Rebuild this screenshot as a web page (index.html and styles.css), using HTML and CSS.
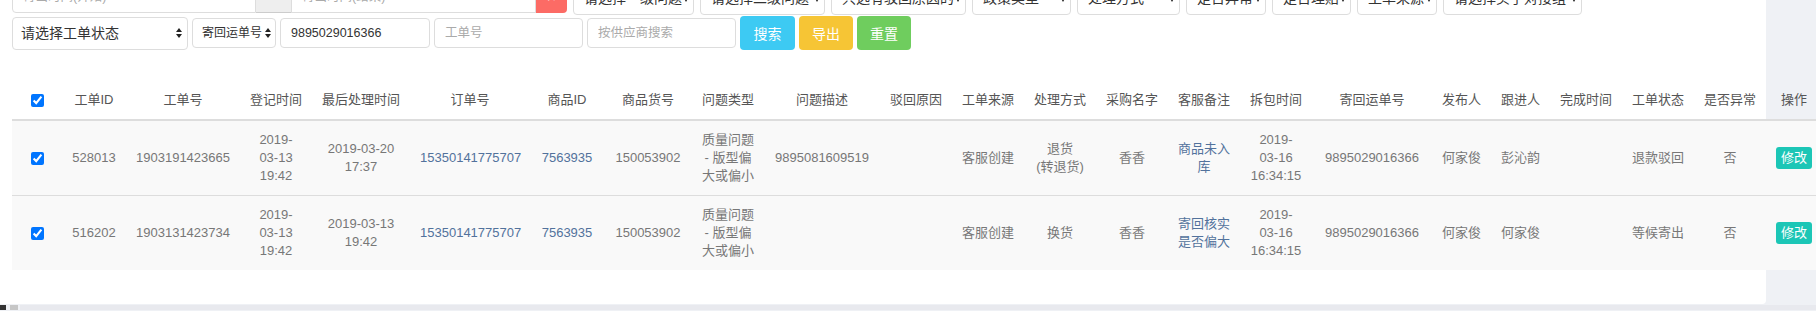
FILE: index.html
```html
<!DOCTYPE html>
<html lang="zh-CN">
<head>
    <meta charset="UTF-8">
    <meta name="viewport" content="width=device-width, initial-scale=1.0">
    <title>售后工单</title>
    <link rel="stylesheet" href="styles.css">
</head>
<body>
    <div class="panel">
        <div class="filters">
            <!-- 第一行筛选 -->
            <div class="filter-row filter-row-top">
                <div class="input-group">
                    <input class="form-input date-start" type="text" placeholder="寄出时间(开始)">
                    <span class="addon">–</span>
                    <div class="clearable">
                        <input class="form-input date-end" type="text" placeholder="寄出时间(结束)">
                        <button class="clear-btn">&times;</button>
                    </div>
                </div>
                <div class="select-wrap sel-level1">
                    <select><option>请选择一级问题</option></select><i class="caret"></i>
                </div>
                <div class="select-wrap sel-level2">
                    <select><option>请选择二级问题</option></select><i class="caret"></i>
                </div>
                <div class="select-wrap sel-reject">
                    <select><option>只选有驳回原因的</option></select><i class="caret"></i>
                </div>
                <div class="select-wrap sel-policy">
                    <select><option>政策类型</option></select><i class="caret"></i>
                </div>
                <div class="select-wrap sel-handle">
                    <select><option>处理方式</option></select><i class="caret"></i>
                </div>
                <div class="select-wrap sel-short">
                    <select><option>是否异常</option></select><i class="caret"></i>
                </div>
                <div class="select-wrap sel-claim">
                    <select><option>是否理赔</option></select><i class="caret"></i>
                </div>
                <div class="select-wrap sel-short">
                    <select><option>工单来源</option></select><i class="caret"></i>
                </div>
                <div class="select-wrap sel-buyer">
                    <select><option>请选择买手对接组</option></select><i class="caret"></i>
                </div>
            </div>

            <!-- 第二行筛选 -->
            <div class="filter-row filter-row-bottom">
                <div class="select-wrap select-large sel-status">
                    <select><option>请选择工单状态</option></select><i class="caret-updown"></i>
                </div>
                <div class="select-wrap select-small sel-field">
                    <select><option>寄回运单号</option></select><i class="caret-updown"></i>
                </div>
                <input class="form-input input-small search-value" type="text" value="9895029016366">
                <input class="form-input input-small search-ticket" type="text" placeholder="工单号">
                <input class="form-input input-small search-supplier" type="text" placeholder="按供应商搜索">
                <button class="btn btn-search">搜索</button>
                <button class="btn btn-export">导出</button>
                <button class="btn btn-reset">重置</button>
            </div>
        </div>

        <table class="order-table">
            <colgroup>
                <col class="w50">
                <col class="w64">
                <col class="w114">
                <col class="w72">
                <col class="w98">
                <col class="w120">
                <col class="w74">
                <col class="w88">
                <col class="w72">
                <col class="w116">
                <col class="w72">
                <col class="w72">
                <col class="w72">
                <col class="w72">
                <col class="w72">
                <col class="w72">
                <col class="w120">
                <col class="w59">
                <col class="w59">
                <col class="w72">
                <col class="w72">
                <col class="w72">
                <col class="w56">
            </colgroup>
            <thead>
                <tr>
                    <th><input type="checkbox" checked></th>
                    <th>工单ID</th>
                    <th>工单号</th>
                    <th>登记时间</th>
                    <th>最后处理时间</th>
                    <th>订单号</th>
                    <th>商品ID</th>
                    <th>商品货号</th>
                    <th>问题类型</th>
                    <th>问题描述</th>
                    <th>驳回原因</th>
                    <th>工单来源</th>
                    <th>处理方式</th>
                    <th>采购名字</th>
                    <th>客服备注</th>
                    <th>拆包时间</th>
                    <th>寄回运单号</th>
                    <th>发布人</th>
                    <th>跟进人</th>
                    <th>完成时间</th>
                    <th>工单状态</th>
                    <th>是否异常</th>
                    <th>操作</th>
                </tr>
            </thead>
            <tbody>
                <tr>
                    <td><input type="checkbox" checked></td>
                    <td>528013</td>
                    <td>1903191423665</td>
                    <td>2019-03-13 19:42</td>
                    <td>2019-03-20 17:37</td>
                    <td><a href="#">15350141775707</a></td>
                    <td><a href="#">7563935</a></td>
                    <td>150053902</td>
                    <td>质量问题 - 版型偏大或偏小</td>
                    <td>9895081609519</td>
                    <td></td>
                    <td>客服创建</td>
                    <td>退货<br>(转退货)</td>
                    <td>香香</td>
                    <td><a href="#">商品未入库</a></td>
                    <td>2019-03-16 16:34:15</td>
                    <td>9895029016366</td>
                    <td>何家俊</td>
                    <td>彭沁韵</td>
                    <td></td>
                    <td>退款驳回</td>
                    <td>否</td>
                    <td><button class="edit-btn">修改</button></td>
                </tr>
                <tr>
                    <td><input type="checkbox" checked></td>
                    <td>516202</td>
                    <td>1903131423734</td>
                    <td>2019-03-13 19:42</td>
                    <td>2019-03-13 19:42</td>
                    <td><a href="#">15350141775707</a></td>
                    <td><a href="#">7563935</a></td>
                    <td>150053902</td>
                    <td>质量问题 - 版型偏大或偏小</td>
                    <td></td>
                    <td></td>
                    <td>客服创建</td>
                    <td>换货</td>
                    <td>香香</td>
                    <td><a href="#">寄回核实是否偏大</a></td>
                    <td>2019-03-16 16:34:15</td>
                    <td>9895029016366</td>
                    <td>何家俊</td>
                    <td>何家俊</td>
                    <td></td>
                    <td>等候寄出</td>
                    <td>否</td>
                    <td><button class="edit-btn">修改</button></td>
                </tr>
            </tbody>
        </table>
    </div>

    <div class="scrollbar">
        <span class="bar-dark"></span>
        <span class="bar-light"></span>
        <span class="bar-track"></span>
    </div>
</body>
</html>
```

FILE: styles.css
```css
body {
    margin: 0;
    height: 311px;
    overflow: hidden;
    background-color: #eff1f5;
    font-family: "Liberation Sans", "Noto Sans CJK SC", sans-serif;
    font-size: 13px;
    color: #333;
}

.panel {
    width: 1766px;
    box-sizing: border-box;
    padding: 0 0 34px 12px;
    background-color: #fff;
    border-bottom-right-radius: 4px;
}

/* 筛选区 */
.filters {
    margin-top: -19px;
}

.filter-row {
    display: flex;
    gap: 6px;
    height: 34px;
}

.filter-row-bottom {
    gap: 4px;
    margin-top: 1px;
    align-items: center;
}

.form-input {
    box-sizing: border-box;
    height: 32px;
    padding: 0 10px;
    border: 1px solid #ddd;
    border-radius: 4px;
    background-color: #fff;
    font-family: inherit;
    font-size: 12.5px;
    color: #333;
    outline: none;
}

.form-input::placeholder {
    color: #aaa;
}

.input-group {
    display: flex;
    width: 555px;
}

.date-start {
    width: 244px;
    border-radius: 4px 0 0 4px;
}

.addon {
    box-sizing: border-box;
    width: 35px;
    height: 32px;
    line-height: 30px;
    text-align: center;
    background-color: #eee;
    border: 1px solid #ccc;
    border-left: none;
    border-right: none;
    color: #555;
}

.clearable {
    display: flex;
    flex: 1;
}

.date-end {
    flex: 1;
    min-width: 0;
    border-radius: 0;
}

.clear-btn {
    width: 31px;
    height: 32px;
    padding: 0;
    border: none;
    border-radius: 0 4px 4px 0;
    background-color: #fc6b65;
    color: #fff;
    font-size: 16px;
    font-weight: bold;
}

.select-wrap {
    position: relative;
    box-sizing: border-box;
    height: 34px;
}

.select-wrap select {
    -webkit-appearance: none;
    appearance: none;
    box-sizing: border-box;
    width: 100%;
    height: 100%;
    padding: 0 10px 0 10px;
    border: 1px solid #ddd;
    border-radius: 4px;
    background-color: #fff;
    font-family: inherit;
    font-size: 14px;
    color: #333;
    outline: none;
}

.caret {
    position: absolute;
    right: 4px;
    top: 50%;
    margin-top: -3px;
    border-left: 4px solid transparent;
    border-right: 4px solid transparent;
    border-top: 7px solid #222;
    pointer-events: none;
}

.caret-updown {
    position: absolute;
    right: 5px;
    top: 50%;
    margin-top: -5px;
    width: 7px;
    height: 10px;
    pointer-events: none;
}

.caret-updown::before,
.caret-updown::after {
    content: "";
    position: absolute;
    left: 0;
    border-left: 3.5px solid transparent;
    border-right: 3.5px solid transparent;
}

.caret-updown::before {
    top: 0;
    border-bottom: 4px solid #222;
}

.caret-updown::after {
    bottom: 0;
    border-top: 4px solid #222;
}

.sel-level1 { width: 121px; }
.sel-level2 { width: 125px; }
.sel-reject { width: 135px; }
.sel-policy { width: 99px; }
.sel-handle { width: 103px; }
.sel-short { width: 80px; }
.sel-claim { width: 79px; }
.sel-buyer { width: 139px; }

.select-large {
    height: 33px;
}

.select-large select {
    padding: 0 16px 0 8px;
}

.select-small {
    height: 30px;
}

.select-small select {
    font-size: 12px;
    padding: 0 10px 0 9px;
}

.select-small .caret-updown {
    right: 4px;
}

.sel-status { width: 176px; }
.sel-field { width: 84px; }

.input-small {
    height: 30px;
}

.search-value { width: 150px; }
.search-ticket { width: 149px; }
.search-supplier { width: 149px; }

.btn {
    width: 54px;
    height: 34px;
    padding: 0;
    border: none;
    border-radius: 4px;
    color: #fff;
    font-family: inherit;
    font-size: 14px;
    cursor: pointer;
}

.btn-search {
    width: 55px;
    background-color: #3dcaf3;
}

.btn-export {
    background-color: #f6c535;
}

.btn-reset {
    background-color: #6fcd5e;
}

/* 工单表格 */
.order-table {
    table-layout: fixed;
    width: 1810px;
    margin-top: 31px;
    border-collapse: collapse;
}

.order-table th,
.order-table td {
    padding: 10px;
    line-height: 18px;
    text-align: center;
    vertical-align: middle;
}

.order-table th {
    font-weight: normal;
    color: #555;
    border-bottom: 2px solid #ddd;
}

.order-table td {
    color: #777;
    border-top: 1px solid #ddd;
}

.order-table tbody tr {
    background-color: #f9f9f9;
}

.order-table a {
    color: #52729c;
    text-decoration: none;
}

.order-table input[type="checkbox"] {
    width: 13px;
    height: 13px;
    margin: 0;
    vertical-align: middle;
}

.w50 { width: 50px; }
.w56 { width: 56px; }
.w59 { width: 59px; }
.w64 { width: 64px; }
.w72 { width: 72px; }
.w74 { width: 74px; }
.w88 { width: 88px; }
.w98 { width: 98px; }
.w114 { width: 114px; }
.w116 { width: 116px; }
.w120 { width: 120px; }

.edit-btn {
    display: inline-block;
    padding: 2px 5px;
    border: none;
    border-radius: 3px;
    background-color: #1cc6b6;
    color: #fff;
    font-family: inherit;
    font-size: 13px;
    line-height: 18px;
    vertical-align: middle;
}

/* 底部横向滚动条 */
.scrollbar {
    display: flex;
    height: 5px;
    margin-top: 1px;
}

.bar-dark {
    width: 6px;
    background-color: #333;
}

.bar-light {
    width: 8px;
    margin-left: 4px;
    background-color: #c6c6c6;
}

.bar-track {
    flex: 1;
    margin-left: 2px;
    background-color: #e8e9ee;
}
```
